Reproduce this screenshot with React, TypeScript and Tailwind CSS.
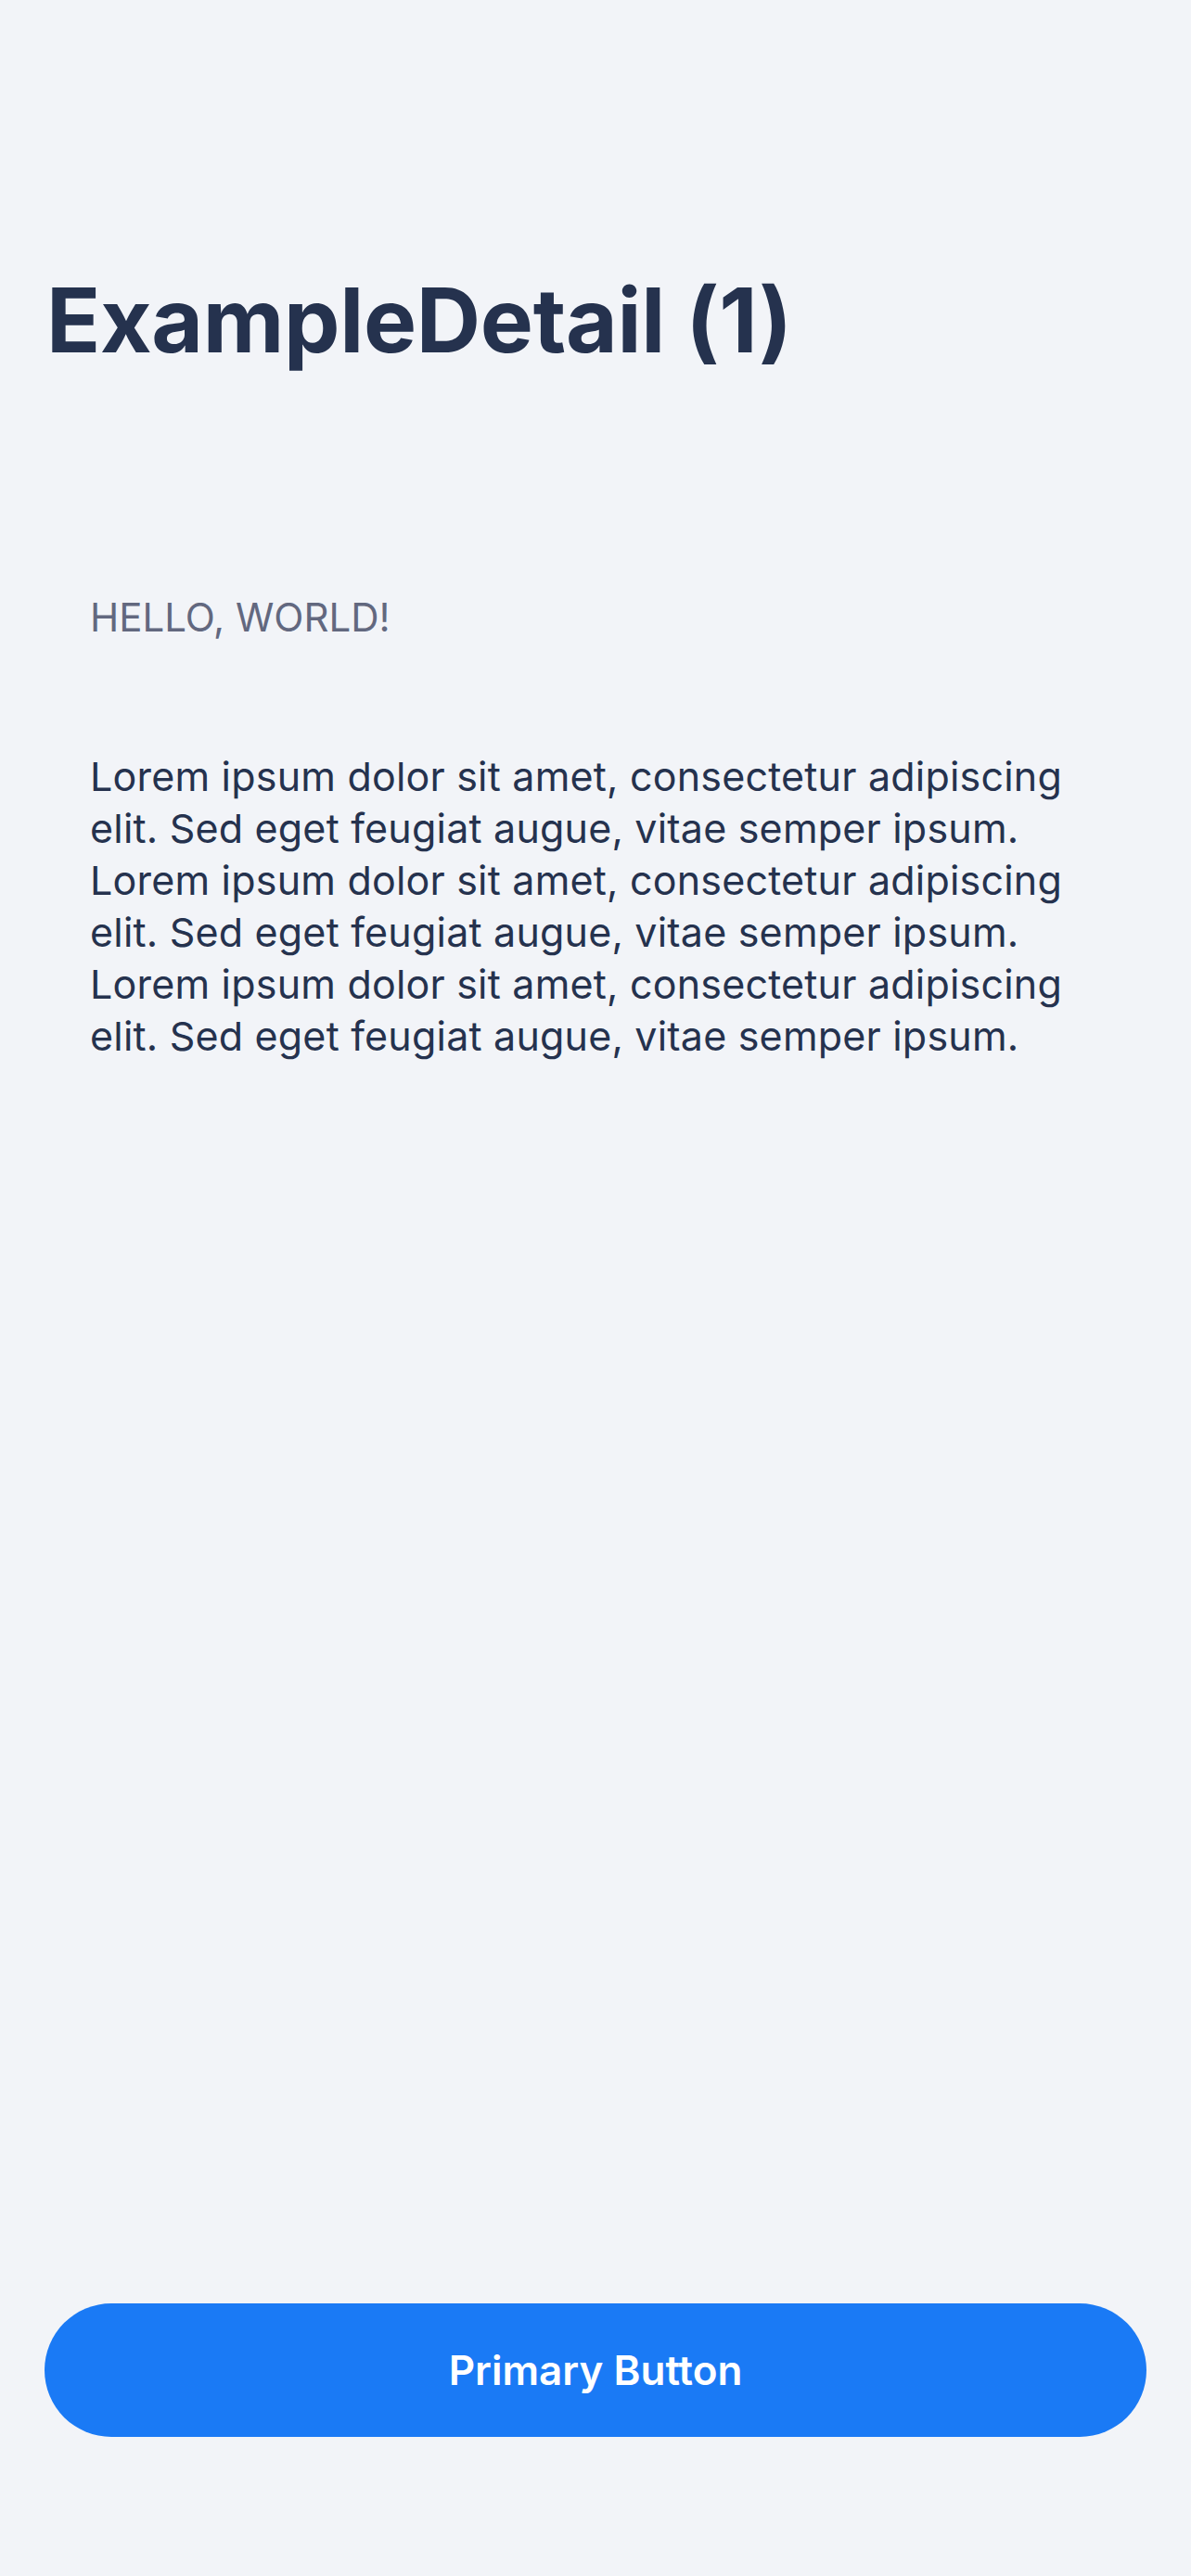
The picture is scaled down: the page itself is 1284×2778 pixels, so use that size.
import React from "react";

const lines = [
  "Lorem ipsum dolor sit amet, consectetur adipiscing",
  "elit. Sed eget feugiat augue, vitae semper ipsum.",
  "Lorem ipsum dolor sit amet, consectetur adipiscing",
  "elit. Sed eget feugiat augue, vitae semper ipsum.",
  "Lorem ipsum dolor sit amet, consectetur adipiscing",
  "elit. Sed eget feugiat augue, vitae semper ipsum.",
];

export default function App() {
  return (
    <div
      className="min-h-screen w-full bg-[#f2f4f8] flex flex-col"
      style={{ fontFamily: "Inter, 'Noto Sans', sans-serif" }}
    >
      <div className="pt-[297px] pl-[50px]">
        <h1 className="text-[96px] leading-none font-bold text-[#25324e] tracking-[-0.3px]">
          ExampleDetail (1)
        </h1>
      </div>
      <div className="px-[97px] pt-[252px]">
        <p className="text-[42px] leading-none text-[#62687f] uppercase">Hello, World!</p>
      </div>
      <div className="pl-[97px] pr-[40px] pt-[122px]">
        <p className="text-[43px] leading-[56px] text-[#25324e] whitespace-nowrap tracking-[0.2px]">
          {lines.map((l, i) => (
            <React.Fragment key={i}>
              {l}
              {i < lines.length - 1 && <br />}
            </React.Fragment>
          ))}
        </p>
      </div>
      <div className="flex-1" />
      <div className="px-[48px] pb-[150px]">
        <button className="w-full h-[144px] rounded-full bg-[#1a7af5] text-white text-[44px] font-semibold flex items-center justify-center">
          Primary Button
        </button>
      </div>
    </div>
  );
}
